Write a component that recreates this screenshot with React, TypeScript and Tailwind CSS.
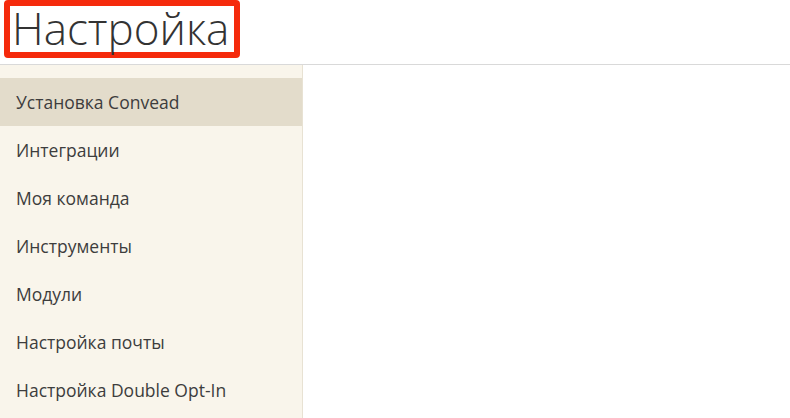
export default function App() {
  const items = [
    "Установка Convead",
    "Интеграции",
    "Моя команда",
    "Инструменты",
    "Модули",
    "Настройка почты",
    "Настройка Double Opt-In",
  ]

  return (
    <div className="min-h-screen bg-white font-['Open_Sans',sans-serif] overflow-hidden">
      {/* Header */}
      <header className="h-[65px] border-b border-[#d9d9d9] pl-[4px]">
        <div className="inline-block h-[58px] border-[6px] border-[#f52a0c] rounded-[4px] bg-white pl-[2px] pr-[5px]">
          <h1 className="text-[44px] font-light leading-[44px] text-[#333333]">Настройка</h1>
        </div>
      </header>

      <div className="flex">
        {/* Sidebar */}
        <nav className="w-[303px] h-[360px] bg-[#f9f5eb] border-r border-[#e8e2d3] pt-[13px]">
          {items.map((item, i) => (
            <div
              key={item}
              className={`h-[48px] flex items-center pl-[16px] text-[17.5px] text-[#3d3d3d] ${i === 0 ? "bg-[#e3dccb]" : ""}`}
            >
              {item}
            </div>
          ))}
        </nav>
        <main className="flex-1" />
      </div>
    </div>
  )
}
